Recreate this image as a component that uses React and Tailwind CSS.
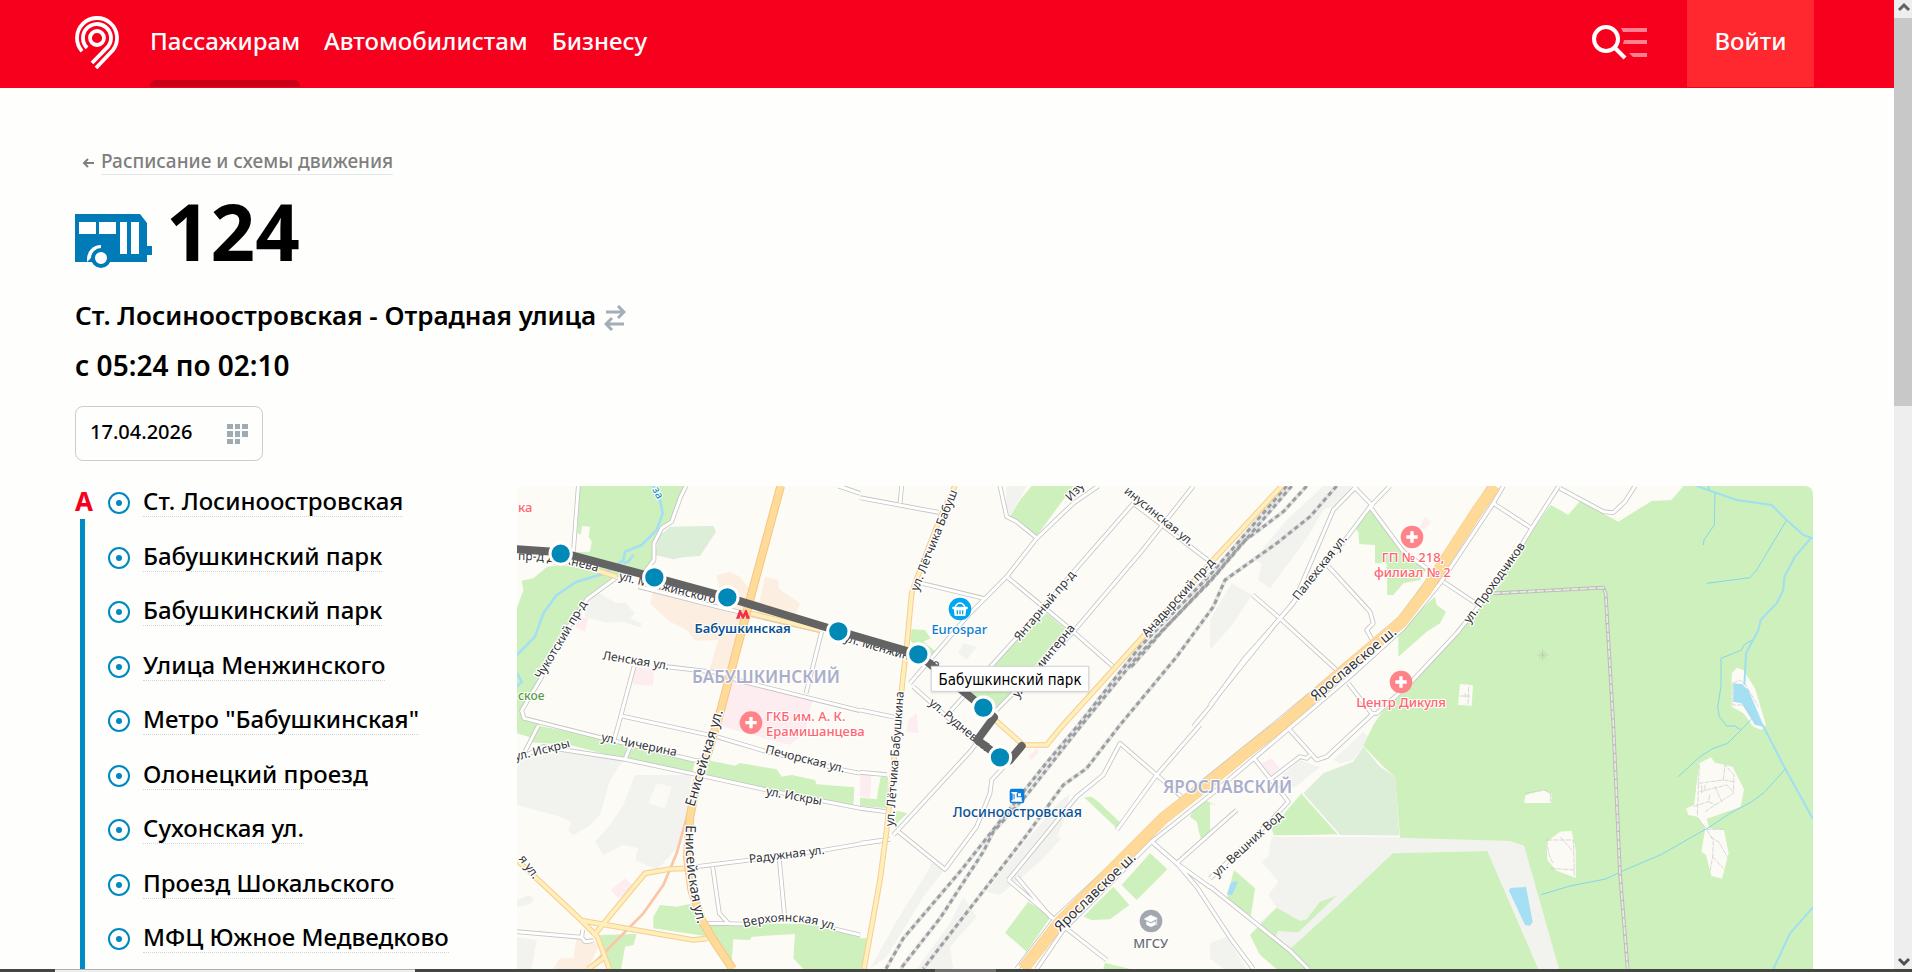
import { useState } from 'react'

const NAV = [
  { label: 'Пассажирам', active: true },
  { label: 'Автомобилистам' },
  { label: 'Бизнесу' },
]

const STOPS = [
  'Ст. Лосиноостровская',
  'Бабушкинский парк',
  'Бабушкинский парк',
  'Улица Менжинского',
  'Метро "Бабушкинская"',
  'Олонецкий проезд',
  'Сухонская ул.',
  'Проезд Шокальского',
  'МФЦ Южное Медведково',
]

// Map units: three per screen pixel at the default zoom
const GREENS = [
  '208,18 202,160 213,163 216,138 240,140 236,170 245,185 240,215 188,216 180,245 110,262 70,295 35,302 40,330 21,385 21,760 60,772 95,725 45,718 32,695 90,590 180,420 230,360 315,295 405,270 430,240 430,190 455,145 480,130 505,60 528,18',
  '85,737 280,775 555,840 548,878 345,838 180,795 62,787',
  '600,842 675,857 690,849 800,868 815,890 845,885 915,900 920,913 1033,922 1030,978 935,970 760,930 580,888',
  '1112,890 1134,890 1132,985 1050,978 1050,953 1100,958',
  '1160,992 1192,1000 1150,1040',
  '270,1365 380,1362 370,1395 345,1400 333,1467 298,1467',
  '430,1310 450,1275 500,1280 540,1272 595,1338 740,1330 900,1332 1050,1368 1050,1467 880,1467 850,1435 855,1362 725,1370 720,1380 670,1378 665,1445 600,1370 430,1345',
  '1050,1375 1070,1375 1062,1466 1050,1466',
  '1500,110 1530,60 1565,18 1690,18 1580,168',
  '1610,400 1670,450 1460,690 1370,640 1450,560 1480,515',
  '1205,448 1245,450 1262,475 1240,485 1278,515 1250,530 1200,480',
  '1722,952 1745,950 1765,965 1835,1032 1825,1050 1800,1025',
  '1920,1120 1972,1168 1880,1260 1835,1215',
  '1810,1220 1858,1275 1800,1318 1745,1320 1720,1310 1740,1290',
  '1555,1265 1622,1310 1550,1415 1485,1358',
  '1785,1448 1860,1467 1780,1467',
  '2085,960 2050,990 2040,1010 2060,1025 2072,1075 2100,1060 2100,970 2124,978',
  '2580,90 2690,215 2750,265 2730,300 2680,310 2650,345 2632,345 2630,250 2595,250 2595,195 2548,192 2545,155 2535,145',
  '2775,350 2780,375 2808,395 2790,430 2750,455 2665,530 2665,445 2720,400',
  '3520,18 3909,18 3909,1467 3147,1467 3042,1097 3000,1083 2670,1073 2655,890 2620,860 2560,797 2590,735 2620,690 2700,620 2870,430 2975,310 2985,260 3060,160 3122,75 3150,90 3175,105 3210,63 3325,125 3425,63 3485,60',
  '2375,940 2485,1063 2292,1067 2285,1045',
  '2172,1170 2235,1225 2222,1310 2150,1255',
  '2220,1365 2300,1283 2370,1323 2390,1318 2430,1265 2480,1247 2365,1357 2305,1353 2295,1370 2340,1407 2395,1467 2300,1467 2250,1425',
  '2648,1120 2932,1113 3085,1467 2392,1467 2340,1407 2485,1275',
]

const GREYS = [
  '21,845 60,830 180,813 340,840 300,900 270,1005 235,1040 190,1065 175,1050 185,1025 150,1010 21,975',
  '375,885 545,885 535,985 500,1105 440,1170 375,1140 385,1105 340,1095 280,1125 255,1085 300,1035 340,975',
  '260,335 320,370 345,368 375,400 360,415 395,430 390,442 340,425 290,428 225,410 225,365',
  '1490,18 1550,18 1500,110 1485,110',
  '2440,18 2540,18 2510,62 2490,60 2475,75 2440,90 2400,160 2350,230 2280,325 2245,300 2255,250 2230,240 2330,120',
  '2165,310 2225,345 2170,430 2100,510 2100,420',
  '1645,970 1680,940 1672,975 1690,960 1640,1070 1655,1075 1590,1145 1470,1245 1430,1235 1455,1200 1550,1080',
  '1265,1150 1310,1160 1240,1250 1130,1430 1080,1467 1150,1340 1180,1290 1250,1180',
  '1320,1330 1360,1250 1400,1310 1320,1400 1330,1467 1220,1467',
  '1360,490 1400,500 1370,540 1345,520',
  '2470,840 2560,755 2575,775 2530,840 2490,850',
  '2320,885 2370,840 2430,862 2350,925',
  '2285,1070 2668,1070 3000,1083 3042,1097 3147,1467 3085,1467 2932,1113 2648,1120 2485,1275 2340,1407 2295,1370 2250,1325 2300,1283 2275,1245 2305,1205 2255,1145 2275,1130',
  '2100,1390 2150,1370 2210,1467 2140,1467 2100,1435',
  '21,1260 60,1245 72,1260 55,1275 21,1280',
  '21,1372 80,1380 65,1467 21,1467',
]

const PINKS = [
  '190,405 235,415 225,455 185,435',
  '370,560 432,570 428,618 368,612',
  '665,590 908,658 885,760 840,795 620,735',
  '345,1195 368,1215 360,1240 325,1255 302,1230',
  '1195,720 1220,700 1225,760 1190,755',
  '1050,880 1085,885 1080,955 1050,950',
  '2745,110 2763,125 2745,148 2730,142',
  '2255,850 2285,835 2310,865 2280,890',
  '1555,830 1580,805 1588,815 1565,840',
]

const PEACH = [
  '430,330 560,370 640,385 625,480 555,482 530,450 480,425 420,370',
  '620,285 660,275 690,290 720,330 650,585 598,570 625,480 640,380',
  '765,290 805,300 805,325 870,370 855,410 740,400',
  '200,1370 250,1380 265,1400 235,1467 130,1467 150,1435 190,1435',
]

const STREETS = [
  'M205 18L190 218',
  'M528 18L512 50L485 125L455 145L432 190L432 240L405 275',
  'M320 292L230 358L170 450L90 600L35 692L42 715L280 775L550 840L590 845',
  'M385 320L640 385L930 452',
  'M470 560L640 580L680 600L1050 692',
  'M372 560L325 735L312 780',
  'M335 708L620 770L770 815L1000 870L1050 880',
  'M935 455L888 640',
  'M85 737L45 815',
  'M21 840L100 800L345 838L580 888L770 930L1050 985L1130 995',
  'M360 800L345 838',
  'M520 1165L720 1140L945 1110L1050 1092L1130 1080',
  'M608 1160L628 1300L655 1330',
  'M590 1330L700 1332',
  'M808 1140L825 1320',
  'M965 1345L1050 1365',
  'M21 1355L215 1372L218 1350',
  'M215 1372L225 1385L250 1382',
  'M1050 690L1155 712',
  'M1050 53L1285 97',
  'M1175 18L1170 70',
  'M985 18L1050 40',
  'M1235 310L1420 355',
  'M1470 18L1490 110L1520 125L1578 172',
  'M1765 18L1690 70L1580 175L1490 290L1380 400L1200 610',
  'M1490 290L1690 455L1810 560',
  'M1870 70L1700 265L1550 440L1320 695',
  'M2050 18L1890 220L1690 455L1460 690',
  'M1870 70L2100 245',
  'M1210 620L1260 665L1400 790L1380 815L1150 1065',
  'M1050 877L1130 884',
  'M1050 1090L1140 1078',
  'M1165 1055L1305 1168L1400 1040L1440 940L1445 900L1500 840',
  'M2070 735L1940 885L1820 1050',
  'M1495 1200L1630 1315L1790 1440',
  'M1495 1200L1700 950L1780 885L1830 790L1940 885L2015 950',
  'M1520 1190L1625 1315',
  'M2540 18L2470 90L2350 370L2200 540L2100 680L2050 740',
  'M2530 18L2590 80',
  'M2640 18L2580 80L2490 200L2310 415L2100 675',
  'M2580 80L2680 215L2750 265',
  'M2455 260L2470 275L2580 395L2590 430L2570 450L2590 485',
  'M2228 345L2310 415L2480 570',
  'M2940 18L2770 280L2660 430L2500 560L2290 735L2060 920L1640 1310L1520 1467',
  'M2980 18L2950 70L2790 310L2680 445L2520 590L2350 735L2120 930L1925 1085L1660 1350L1580 1467',
  'M2950 70L3065 145',
  'M3145 20L3065 145L2970 300L2840 460L2700 610L2600 700L2585 700L2515 610',
  'M2800 305L2905 375',
  'M2590 700L2450 830L2420 840L2335 745',
  'M2230 832L2335 965L2285 1020L2100 1195',
  'M2285 895L2370 830L2390 835L2400 825',
  'M2180 990L2000 1150L1925 1085',
  'M2000 1150L2100 1222',
  'M1925 1085L2000 1150L2060 1220L2165 1380L2230 1467',
  'M2100 1220L2340 1412L2395 1467',
  'M3150 25L3280 95L3310 98L3345 65L3375 18',
]

const YELLOW_ROADS = [
  'M1335 18L1290 115L1230 270L1205 340L1190 500L1178 600L1165 735L1150 860L1130 1050L1110 1200L1062 1466',
  'M2315 18L2110 240L1890 480L1655 740L1610 795L1540 795L1450 715',
  'M180 245L320 290',
  'M720 400L930 450',
  'M21 1140L215 1322L262 1370L298 1466',
  'M215 1322L550 1380L592 1375',
  'M250 1368L405 1180L480 1167L535 1165',
  'M235 1467L285 1430',
]

const YAROSLAVKA = 'M2955 18L2900 95L2800 250L2745 335L2675 425L2480 590L2320 730L2210 815L2100 905L1960 1015L1850 1125L1650 1325L1540 1467'
const YENISEI = 'M812 18L725 340L635 680L595 815L560 910L540 1010L532 1130L545 1230L575 1320L610 1380L668 1467'
const FOREST_TRACK = 'M2950 340L3280 323L3287 340L3310 735L3330 1180L3353 1467'

const RAILS = [
  'M2330 18L2100 285L1890 500L1705 735L1600 860L1350 1175L1180 1375L1128 1466',
  'M2345 18L2100 305L1890 520L1715 735L1550 945L1450 1055L1420 1115L1290 1315L1172 1466',
  'M2390 18L2320 95L2200 185L2120 280L1960 450L1860 565',
  'M2480 18L2400 110L2300 190L2145 300L2110 380L2000 530L1830 735L1730 865L1660 915L1550 1065L1240 1466',
]

const STREAMS_WIDE = [
  'M3560 18L3680 60L3785 75L3830 120L3880 165L3909 175',
  'M3902 175L3855 230L3823 290L3820 330L3800 370L3752 420L3745 450L3708 520L3703 615',
  'M3758 735L3825 865L3909 1017',
  'M3909 1282L3840 1360L3790 1467',
]

const STREAMS = [
  'M3615 38L3613 135L3582 180L3580 195',
  'M3595 18L3597 30',
  'M3830 120L3740 270L3720 293L3590 310',
  'M3725 480L3700 497L3695 510L3633 535L3633 620L3623 680L3628 710L3650 738L3675 738L3692 750',
  'M3723 718L3705 738L3653 790L3608 806L3570 830L3505 890',
  'M3825 868L3762 938L3722 967L3655 1003L3600 1040L3455 1123L3340 1172L3287 1197L3180 1218L3093 1244',
]

const CLEARINGS = [
  '3568,850 3603,832 3615,848 3668,860 3702,928 3692,980 3590,1017 3598,1045 3642,1050 3656,1120 3636,1196 3604,1188 3588,1125 3574,1115 3586,1045 3562,1010 3535,1005 3528,985 3552,975',
  '3047,945 3100,930 3125,942 3123,969 3042,969',
  '3110,1085 3150,1055 3185,1052 3197,1110 3198,1194 3140,1172 3112,1140',
  '2850,612 2889,616 2885,678 2844,674',
  '3665,580 3680,563 3700,570 3735,625 3768,735 3755,750 3730,740 3700,700 3665,680',
  '440,910 485,920 465,985 415,970',
]

const PATHS = [
  'M3568 855L3562 1008M3565 910L3640 900L3672 905M3640 900L3645 855L3672 885L3670 940L3585 995M3570 935L3650 915L3670 935M3575 915V940M3585 915V935M3615 920L3635 965M3600 945L3595 965L3615 975M3550 980L3595 965M3565 1015L3590 1048L3640 1048M3590 1050L3610 1080L3608 1130L3600 1175M3600 1070L3625 1085L3655 1135M3608 1130L3640 1165',
  'M3110 1080H3190L3193 1190M3150 1070L3190 1115M3120 1165L3195 1170M3110 1080Q3115 1130 3130 1150',
  'M3045 940L3105 930L3122 942L3120 965',
  'M2876 620L2874 675M2850 648H2864M2866 640V652M2866 648H2880',
  'M3668 610L3690 600L3705 612L3745 680M3668 612L3668 675L3700 675L3740 730',
]

const ROUTE = 'M21 208L152 217L433 292L652 352L985 453L1225 523L1420 683L1452 712L1402 780L1470 832L1498 842L1535 798'
const ROUTE_STOPS = [
  [152, 221],
  [433, 292],
  [652, 352],
  [985, 454],
  [1225, 523],
  [1420, 683],
  [1470, 832],
]

// Street names run from (x1, y1) towards (x2, y2), centred between them
const STREET_NAMES = [
  ['ул. Менжинского', 318, 297, 622, 372],
  ['Чукотский пр-д', 95, 597, 230, 374],
  ['Ленская ул.', 280, 538, 472, 569],
  ['ул. Чичерина', 275, 783, 495, 828],
  ['ул. Искры', 26, 840, 172, 803],
  ['Печорская ул.', 768, 820, 998, 877],
  ['ул. Искры', 768, 945, 932, 975],
  ['Радужная ул.', 722, 1149, 942, 1122],
  ['я ул.', 30, 1143, 66, 1192],
  ['ул. Лётчика Бабуш', 1222, 340, 1344, 30],
  ['ул. Лётчика Бабушкина', 1150, 1050, 1182, 624],
  ['ул. Менжинского', 1005, 485, 1280, 565],
  ['Янтарный пр-д', 1528, 485, 1698, 285],
  ['ул. Коминтерна', 1524, 655, 1696, 445],
  ['Анадырский пр-д', 1903, 482, 2123, 240],
  ['инусинская ул.', 1842, 38, 2038, 198],
  ['Изу', 1690, 56, 1716, 28],
  ['ул. Рудневой', 1255, 672, 1425, 815],
  ['Палехская ул.', 2365, 362, 2512, 177],
  ['ул. Проходчиков', 2880, 430, 3045, 200],
  ['ул. Вешних Вод', 2122, 1192, 2320, 1010],
]

const HIGHWAY_NAMES = [
  ['Ярославское ш.', 2410, 670, 2668, 455],
  ['Ярославское ш.', 1645, 1362, 1885, 1130],
  ['Енисейская ул.', 552, 985, 640, 690],
]

function StreetName({ item, size }) {
  const [text, x1, y1, x2, y2] = item
  const angle = (Math.atan2(y2 - y1, x2 - x1) * 180) / Math.PI
  return (
    <text
      transform={`translate(${(x1 + x2) / 2} ${(y1 + y2) / 2}) rotate(${angle})`}
      textAnchor="middle"
      fontSize={size}
    >
      {text}
    </text>
  )
}

function Polygons({ items, fill }) {
  return (
    <g fill={fill}>
      {items.map((points) => (
        <polygon key={points} points={points} />
      ))}
    </g>
  )
}

function Lines({ items, stroke, width, dash }) {
  return (
    <g fill="none" stroke={stroke} strokeWidth={width} strokeDasharray={dash} strokeLinejoin="round">
      {items.map((d) => (
        <path key={d} d={d} />
      ))}
    </g>
  )
}

function ClinicPin({ x, y }) {
  return (
    <g transform={`translate(${x} ${y})`}>
      <circle r="34" fill="#ff8489" />
      <path d="M-5-17H5V-5H17V5H5V17H-5V5H-17V-5H-5Z" fill="#fff" />
    </g>
  )
}

function RouteMap() {
  return (
    <svg
      viewBox="21 18 3888 1449"
      preserveAspectRatio="xMidYMin slice"
      className="block h-full w-full rounded-t-lg font-['Noto_Sans','Open_Sans',sans-serif]"
      role="img"
      aria-label="Схема маршрута на карте"
    >
      <rect x="21" y="18" width="3888" height="1449" fill="#fcfbf6" />
      <Polygons items={GREYS} fill="#f2f3ef" />
      <Polygons items={PEACH} fill="#fdeee2" />
      <Polygons items={PINKS} fill="#fdedf1" />
      <Polygons items={GREENS} fill="#cdf0bc" />
      <Polygons
        items={[
          '480,140 610,138 618,155 570,228 520,232 490,238 435,225 445,170',
          '2380,940 2440,880 2530,845 2560,800 2610,860 2655,890 2668,1068 2485,1065',
        ]}
        fill="#dcedd8"
      />
      <path d="M2377 940L2488 1065M2290 1068L2668 1069" stroke="#fcfbf6" strokeWidth="5" />
      <Polygons items={CLEARINGS} fill="#fbfaf5" />
      <Polygons
        items={[
          '3000,1225 3010,1223 3048,1221 3068,1325 3060,1337 3045,1335 2997,1232',
          '2178,1203 2184,1206 2166,1246 2151,1243 2162,1210',
          '3670,610 3695,612 3715,630 3762,740 3735,735 3695,670 3670,665',
        ]}
        fill="#a4dff3"
      />

      <Lines items={PATHS} stroke="#c9c9c7" width="2" dash="16 3" />
      <Lines items={STREAMS_WIDE} stroke="#a0dff2" width="6" />
      <Lines items={STREAMS} stroke="#86d6ea" width="3" />
      <path
        d="M430 18L450 60L458 100L440 150L395 195L345 215L340 240L285 280L200 305L140 345L100 400L75 470L21 525M370 225L355 245L340 250M21 580L35 605L21 620"
        fill="none"
        stroke="#a4dff3"
        strokeWidth="8"
        strokeLinejoin="round"
      />
      <Lines items={[FOREST_TRACK]} stroke="#bcbcb9" width="11" />
      <Lines items={[FOREST_TRACK]} stroke="#e9e9e6" width="5" dash="22 4" />

      <Lines items={STREETS} stroke="#c4c5c4" width="14" />
      <Lines items={STREETS} stroke="#fff" width="9" />

      <path d="M538 985L500 1120L460 1215L400 1300L235 1467" fill="none" stroke="#f9c6a6" strokeWidth="8" />
      <Lines items={RAILS} stroke="#e4e5e3" width="12" />
      <Lines items={RAILS} stroke="#9b9fa1" width="9" dash="14 10" />
      <Lines items={YELLOW_ROADS} stroke="#f6cd92" width="17" />
      <Lines items={YELLOW_ROADS} stroke="#ffefba" width="11" />
      <Lines items={[YENISEI]} stroke="#f8c583" width="26" />
      <Lines items={[YENISEI]} stroke="#ffdb9a" width="20" />
      <Lines items={[YAROSLAVKA]} stroke="#f8cd90" width="36" />
      <Lines items={[YAROSLAVKA]} stroke="#ffd998" width="32" />

      <path
        d="M3082 525H3114M3098 509V541M3087 514L3109 536M3109 514L3087 536"
        stroke="#b9c4b2"
        strokeWidth="2"
      />

      <g fill="#333436" fontWeight="400" stroke="#fff" strokeWidth="8" strokeLinejoin="round" paintOrder="stroke">
        {STREET_NAMES.map((item) => (
          <StreetName key={item.join()} item={item} size={36} />
        ))}
        {HIGHWAY_NAMES.map((item) => (
          <StreetName key={item.join()} item={item} size={42} />
        ))}
        <path id="dezhneva" d="M24 240Q150 240 268 278" fill="none" stroke="none" />
        <text fontSize="36">
          <textPath href="#dezhneva">пр-д Дежнева</textPath>
        </text>
        <path id="verkhoyanskaya" d="M702 1343Q850 1300 990 1358" fill="none" stroke="none" />
        <text fontSize="36">
          <textPath href="#verkhoyanskaya">Верхоянская ул.</textPath>
        </text>
        <path id="yenisei-south" d="M528 1035Q520 1180 570 1360" fill="none" stroke="none" />
        <text fontSize="42">
          <textPath href="#yenisei-south">Енисейская ул.</textPath>
        </text>
      </g>

      <g fontWeight="500" stroke="#fff" strokeWidth="6" strokeLinejoin="round" paintOrder="stroke">
        <g fill="#abaeca" fontSize="51" fontWeight="600" textAnchor="middle">
          <text x="768" y="609">БАБУШКИНСКИЙ</text>
          <text x="2153" y="938">ЯРОСЛАВСКИЙ</text>
        </g>
        <g fill="#0b5394" fontSize="42" textAnchor="middle">
          <text x="698" y="458" fontSize="39" fontWeight="600">Бабушкинская</text>
          <text x="1522" y="1010">Лосиноостровская</text>
        </g>
        <g fill="#ff6470" fontSize="39">
          <text x="24" y="95">ка</text>
          <text x="768" y="722">ГКБ им. А. К.</text>
          <text x="768" y="768">Ерамишанцева</text>
          <text x="2709" y="247" textAnchor="middle">ГП № 218,</text>
          <text x="2707" y="292" textAnchor="middle">филиал № 2</text>
          <text x="2673" y="682" textAnchor="middle">Центр Дикуля</text>
        </g>
        <text x="1348" y="463" fill="#0d7ed0" fontSize="39" textAnchor="middle">Eurospar</text>
        <text x="1922" y="1403" fill="#686d75" fontSize="39" textAnchor="middle">МГСУ</text>
        <text x="24" y="660" fill="#5a9a46" fontSize="36">ское</text>
        <text transform="translate(426 28) rotate(62)" fill="#2b93c4" fontSize="33">за</text>
      </g>

      <ClinicPin x={723} y={728} />
      <ClinicPin x={2706} y={171} />
      <ClinicPin x={2673} y={606} />
      <circle cx="1350" cy="387" r="34" fill="#00a6f0" />
      <path d="M1327 380H1373V387H1369L1366 408H1334L1331 387H1327Z" fill="#fff" />
      <path d="M1335 380Q1350 358 1365 380" fill="none" stroke="#fff" strokeWidth="4" />
      <path d="M1342 391V403M1350 391V403M1358 391V403" stroke="#00a6f0" strokeWidth="4" />
      <rect x="1499" y="926" width="44" height="44" rx="7" fill="#0a7ce0" />
      <path d="M1504 936H1522V940H1520V952H1535V962H1537V965H1504V961H1508V940H1504ZM1524 940H1533V949H1524Z" fill="#fff" />
      <path d="M1512 942V958" stroke="#0a7ce0" strokeWidth="3" />
      <circle cx="1923" cy="1323" r="34" fill="#a3a8b0" />
      <path d="M1903 1317L1922 1306L1942 1315L1923 1326ZM1910 1325V1334L1923 1340L1936 1334V1325L1923 1331ZM1940 1317V1336" fill="#fff" stroke="#fff" strokeWidth="2" />
      <path d="M678 416L688 390H692L699 404L706 390H710L720 416H709L707 405L701 416H697L691 405L689 416Z" fill="#ef2f4b" />

      <path d={ROUTE} fill="none" stroke="#636363" strokeWidth="24" strokeLinecap="round" strokeLinejoin="round" />
      {ROUTE_STOPS.map(([x, y]) => (
        <circle key={x} cx={x} cy={y} r="32" fill="#0088b6" stroke="#fff" strokeWidth="9" />
      ))}

      <rect x="1264" y="559" width="472" height="75" fill="#fff" stroke="#d4d4d4" strokeWidth="3" className="drop-shadow-md" />
      <text
        x="1500"
        y="615"
        textAnchor="middle"
        fontSize="45"
        fontWeight="400"
        className="font-['DejaVu_Sans_Condensed','DejaVu_Sans',sans-serif]"
      >
        Бабушкинский парк
      </text>
    </svg>
  )
}

function Logo() {
  return (
    <svg viewBox="0 0 44 54" className="h-[54px] w-11" fill="none" stroke="#fff" strokeWidth="3.8" aria-hidden="true">
      <circle cx="22" cy="22" r="7" />
      <path d="M12.1 31.9A14 14 0 1 1 33.2 30.4L17 47" />
      <path d="M7 35.2A20 20 0 1 1 38 34L21 52" />
    </svg>
  )
}

function BusIcon() {
  return (
    <svg viewBox="0 0 77 56" className="h-14 w-[77px]" aria-hidden="true">
      <path d="M0 0H65L72 9V32H77V41H72V48H0Z" fill="#007bb8" />
      <path d="M4 8H21V20H4ZM24 8H41V20H24ZM45 8H52V40H45ZM56 8H64V40H56Z" fill="#fff" />
      <path d="M12 48V45A14 14 0 0 1 26 31V34" fill="#fff" />
      <circle cx="26" cy="44" r="8" fill="#fff" stroke="#007bb8" strokeWidth="4" />
    </svg>
  )
}

function Header() {
  return (
    <header className="flex h-[88px] shrink-0 items-stretch bg-[#f7001d] pr-20 pl-[75px] text-2xl text-white">
      <a href="#" aria-label="Московский транспорт" className="flex items-center pb-0.5">
        <Logo />
      </a>
      <nav className="ml-[31px] flex gap-6">
        {NAV.map((item) => (
          <a key={item.label} href="#" className="relative flex items-center pb-1.5">
            {item.label}
            {item.active && <span className="absolute inset-x-0 bottom-px h-[7px] rounded-t-md bg-[#c90017]" />}
          </a>
        ))}
      </nav>
      <button type="button" aria-label="Поиск и меню" className="mr-[39px] ml-auto pb-0.5">
        <svg viewBox="0 0 56 36" className="h-9 w-14" aria-hidden="true">
          <circle cx="14" cy="14" r="12" fill="none" stroke="#fff" strokeWidth="4" />
          <path d="M22 22L33 33" stroke="#fff" strokeWidth="4" />
          <path d="M29 3H55V7H31ZM32 15H55V19H31ZM37 28H55V32H41Z" fill="#ff8090" />
        </svg>
      </button>
      <button type="button" className="mb-px w-[127px] bg-[#ff282f] pb-1.5">
        Войти
      </button>
    </header>
  )
}

function StopList() {
  return (
    <div className="relative w-[442px] shrink-0">
      <span className="absolute top-0 left-0 text-[26px] leading-[30px] font-bold text-[#f7001d]">А</span>
      <span className="absolute top-[33px] bottom-0 left-[5px] w-[5px] bg-[#008bc4]" />
      <ul className="grid h-[491px] auto-rows-fr pl-8">
        {STOPS.map((name, i) => (
          <li key={i} className="flex items-start gap-3">
            <svg viewBox="0 0 24 24" className="mt-[5px] size-6 shrink-0" aria-hidden="true">
              <circle cx="12" cy="12" r="10" fill="none" stroke="#0088c2" strokeWidth="2" />
              <circle cx="12" cy="12" r="3" fill="#0088c2" />
            </svg>
            <a href="#" className="border-b border-dotted border-gray-300 text-2xl leading-[30px] whitespace-nowrap">
              {name}
            </a>
          </li>
        ))}
      </ul>
    </div>
  )
}

export default function App() {
  const [date, setDate] = useState('17.04.2026')

  return (
    <div className="flex h-screen flex-col overflow-hidden bg-[#fefefd] font-['Noto_Sans','Open_Sans',sans-serif] font-medium text-black">
      <div className="flex min-h-0 flex-1">
        <div className="flex min-w-0 flex-1 flex-col">
          <Header />
          <main className="flex min-h-0 flex-1 flex-col pr-[81px] pl-[75px]">
            <div className="mt-[61px] flex h-[26px] items-start gap-1 pl-1.5 text-[19px] leading-[25px] text-[#7f7f7f]">
              <svg viewBox="0 0 16 16" className="mt-1.5 size-4" fill="none" stroke="currentColor" strokeWidth="2" aria-hidden="true">
                <path d="M13 8H3M7 4L3 8L7 12" />
              </svg>
              <a href="#" className="border-b border-gray-200">
                Расписание и схемы движения
              </a>
            </div>
            <div className="mt-[27px] flex h-[66px] items-start">
              <div className="mt-3">
                <BusIcon />
              </div>
              <h1 className="ml-3.5 text-[78px] leading-[58px] font-bold">124</h1>
            </div>
            <div className="mt-[29px] flex items-center gap-2 text-[26px] leading-9 font-semibold">
              <h2>Ст. Лосиноостровская - Отрадная улица</h2>
              <button type="button" aria-label="Обратное направление">
                <svg viewBox="0 0 22 26" className="mt-1.5 h-[26px] w-[22px]" fill="none" stroke="#a3aeb8" strokeWidth="3" aria-hidden="true">
                  <path d="M2 7H20M14 1L20 7L14 13M20 19H2M8 13L2 19L8 25" />
                </svg>
              </button>
            </div>
            <p className="mt-3.5 text-[28px] leading-9 font-semibold">с 05:24 по 02:10</p>
            <label className="mt-[23px] flex h-[55px] w-[188px] shrink-0 items-center rounded-lg border border-[#c9ccd6] pr-[13px] pl-3.5">
              <span className="sr-only">Дата</span>
              <input
                value={date}
                onChange={(e) => setDate(e.target.value)}
                className="w-0 flex-1 bg-transparent pb-1 text-xl outline-none"
              />
              <svg viewBox="0 0 22 20" className="h-5 w-[22px]" fill="#9eabb5" aria-hidden="true">
                <path d="M0 0H6V5H0ZM8 0H13V5H8ZM15 0H21V5H15ZM0 7H6V13H0ZM8 7H13V13H8ZM15 7H21V13H15ZM0 15H6V20H0ZM8 15H13V20H8Z" />
              </svg>
            </label>
            <div className="mt-[25px] flex min-h-0 flex-1">
              <StopList />
              <div className="min-w-0 flex-1">
                <RouteMap />
              </div>
            </div>
          </main>
        </div>
        <div className="flex w-[18px] shrink-0 flex-col items-center bg-[#eee]">
          <svg viewBox="0 0 18 18" className="size-[18px]" fill="none" stroke="#606060" strokeWidth="3" aria-hidden="true">
            <path d="M5 10L10 5L15 10" />
          </svg>
          <div className="h-[388px] w-full bg-[#c8c8c8]" />
          <svg viewBox="0 0 18 18" className="mt-auto size-[18px]" fill="none" stroke="#505050" strokeWidth="3" aria-hidden="true">
            <path d="M5 8L10 13L15 8" />
          </svg>
        </div>
      </div>
      <div className="flex h-[3px] shrink-0 bg-[#434641] pl-[55px]">
        <div className="w-[360px] border-t border-[#b0b0b0] bg-[#eee]" />
        <div className="ml-[520px] w-[61px] bg-[#6f706e]" />
      </div>
    </div>
  )
}
